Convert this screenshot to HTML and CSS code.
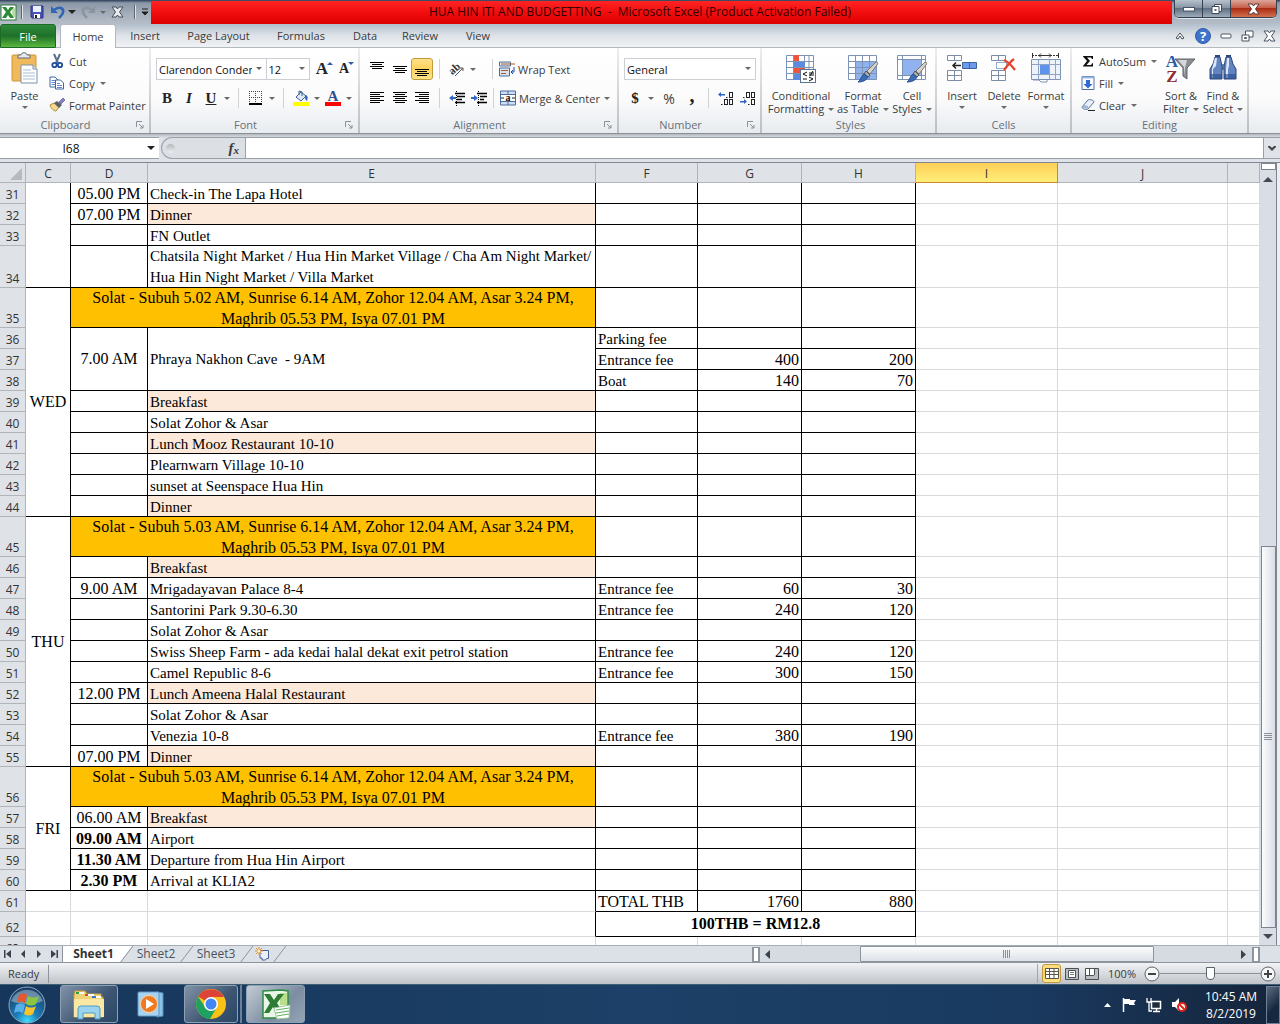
FILE: index.html
```html
<!DOCTYPE html>
<html lang="en">
<head>
<meta charset="utf-8">
<meta name="viewport" content="width=device-width, initial-scale=1">
<title>HUA HIN ITI AND BUDGETTING - Microsoft Excel</title>
<link rel="stylesheet" href="styles.css">
</head>
<body>
<div class="app">
  <header class="titlebar">
    <div class="quick-access">
      <svg class="ico" width="17" height="17" viewBox="0 0 17 17"><rect x="1" y="1" width="15" height="15" fill="#fff" stroke="#2c7a36"/><rect x="12" y="4" width="3" height="9" fill="#b9dcae"/><path d="M2 3h4l2 3 2-3h4L10 8l4 6h-4l-2-3-2 3H2l4-6z" fill="#2e8b35"/></svg>
      <span class="qa-sep"></span>
      <button class="qa" aria-label="Save"><svg width="14" height="14" viewBox="0 0 14 14"><path d="M1 1h12v12H2L1 12z" fill="#4a52b8" stroke="#2c3385"/><rect x="3" y="1" width="8" height="6" fill="#e8f1fb"/><rect x="4" y="9" width="6" height="4" fill="#fff"/><rect x="5" y="10" width="2" height="3" fill="#222"/></svg></button>
      <button class="qa" aria-label="Undo"><svg width="14" height="14" viewBox="0 0 14 14"><path d="M3 5c5-4 10-2 9 2 0 2-2 4-4 6" fill="none" stroke="#2f66b5" stroke-width="2.600"/><path d="M0 1v7h7z" fill="#2f66b5"/></svg></button>
      <span class="arrow dark"></span>
      <button class="qa redo" aria-label="Redo"><svg width="14" height="14" viewBox="0 0 14 14"><path d="M11 5C6 1 1 3 2 7c0 2 2 4 4 6" fill="none" stroke="#8a94a1" stroke-width="2.600"/><path d="M14 1v7H7z" fill="#8a94a1"/></svg></button>
      <span class="arrow"></span>
      <button class="qa wide" aria-label="Close file"><svg width="13" height="12" viewBox="0 0 13 12"><path d="M1 1h4l1.500 2L8 1h4L8.500 6l3.500 5H8L6.500 9 5 11H1l3.500-5z" fill="#e8ebee" stroke="#454e58"/></svg></button>
      <span class="qa-sep"></span>
      <button class="qa more" aria-label="Customize"><svg width="8" height="8" viewBox="0 0 8 8"><path d="M1 1h6M1 4h6L4 7z" stroke="#222" fill="#222"/></svg></button>
    </div>
    <h1 class="title">HUA HIN ITI AND BUDGETTING&nbsp; -&nbsp; Microsoft Excel (Product Activation Failed)</h1>
    <div class="win-buttons">
      <button class="win" aria-label="Minimize"><svg width="12" height="6" viewBox="0 0 12 6"><rect x=".5" y="1.500" width="11" height="3.500" fill="#fff" stroke="#4a5460"/></svg></button>
      <button class="win" aria-label="Restore"><svg width="12" height="12" viewBox="0 0 12 12"><path d="M3.500 1.500h7v7h-7z" fill="#fff" stroke="#3f4a56"/><path d="M1 3.500h7v7H1z" fill="#fff" stroke="#3f4a56"/><rect x="3.500" y="6" width="2" height="2" fill="#5a6570"/></svg></button>
      <button class="win close" aria-label="Close"><svg width="13" height="12" viewBox="0 0 13 12"><path d="M1 1h4l1.500 2L8 1h4L8.500 6l3.500 5H8L6.500 9 5 11H1l3.500-5z" fill="#fff" stroke="#5b3a38"/></svg></button>
    </div>
  </header>

  <nav class="tabs">
    <button class="tab file">File</button>
    <button class="tab home">Home</button>
    <button class="tab w1">Insert</button>
    <button class="tab w4">Page Layout</button>
    <button class="tab w3">Formulas</button>
    <button class="tab w2">Data</button>
    <button class="tab w1">Review</button>
    <button class="tab w1">View</button>
    <div class="tab-tools">
      <svg width="12" height="10" viewBox="0 0 12 10"><path d="M2 7l4-5 4 5-2 1-2-3-2 3z" fill="#fff" stroke="#444d57"/></svg>
      <svg width="16" height="16" viewBox="0 0 16 16"><circle cx="8" cy="8" r="7.500" fill="#3f74cc" stroke="#2f5aa6"/><text x="8" y="13" text-anchor="middle" class="help-mark">?</text></svg>
      <svg width="12" height="6" viewBox="0 0 12 6"><rect x="1" y="1" width="10" height="4" rx="1" fill="#fff" stroke="#4a5460"/></svg>
      <svg width="13" height="12" viewBox="0 0 13 12"><path d="M4.500 1h7.500v6H4.500z" fill="#fff" stroke="#4a5460"/><path d="M1 5h7v6H1z" fill="#fff" stroke="#4a5460"/><path d="M3.500 7.500h2v1h-2z" fill="none" stroke="#4a5460"/></svg>
      <svg width="13" height="12" viewBox="0 0 13 12"><path d="M1 1h4l1.500 2L8 1h4L8.500 6l3.500 5H8L6.500 9 5 11H1l3.500-5z" fill="#fff" stroke="#4a5460"/></svg>
    </div>
  </nav>

  <section class="ribbon">
    <div class="group g-clipboard">
      <div class="group-body">
        <button class="big paste"><svg width="30" height="32" viewBox="0 0 30 32"><rect x="2" y="3" width="24" height="26" rx="1" fill="#efb95c" stroke="#cf963c"/><path d="M8 6V3h3c0-3 6-3 6 0h3v3z" fill="#e9ecef" stroke="#606a75"/><path d="M11 13h12l4 4v14H11z" fill="#fff" stroke="#7c90ab"/><path d="M23 13v4h4" fill="#dbe5f2" stroke="#7c90ab"/><path d="M13 18h8M13 21h12M13 24h12M13 27h12" stroke="#a9bcd6"/></svg><span>Paste</span><i class="arrow"></i></button>
        <div class="stack">
          <button class="small"><svg width="16" height="16" viewBox="0 0 16 16"><path d="M5 1l4 9M11 1L7 10" stroke="#5b7089" stroke-width="2" fill="none"/><circle cx="5.500" cy="12" r="2.200" fill="none" stroke="#1e4b9c" stroke-width="1.800"/><circle cx="11" cy="12" r="2.200" fill="none" stroke="#1e4b9c" stroke-width="1.800"/></svg>Cut</button>
          <button class="small"><svg width="16" height="16" viewBox="0 0 16 16"><path d="M1 2h5l3 3v7H1z" fill="#fff" stroke="#3c64a8"/><path d="M2.500 5.500h4M2.500 7.500h4M2.500 9.500h4" stroke="#5f88c8"/><path d="M6.500 5h5l3 3v6h-8z" fill="#fff" stroke="#3c64a8"/><path d="M8 8.500h3M8 10.500h5M8 12.500h5" stroke="#5f88c8"/></svg>Copy<i class="arrow"></i></button>
          <button class="small"><svg width="16" height="16" viewBox="0 0 16 16"><path d="M1 8l4-2 5 4-3 4c-2 0-5-2-6-6z" fill="#f2d98c" stroke="#b08a34"/><path d="M5 6l3-2 5 4-3 3z" fill="#595f6b"/><path d="M10 5l4-4 2 2-4 4z" fill="#8c80c8" stroke="#4a4a78" stroke-width=".6"/></svg>Format Painter</button>
        </div>
      </div>
      <div class="group-foot"><span>Clipboard</span><button class="launcher" aria-label="Clipboard options"><svg width="8" height="8" viewBox="0 0 8 8"><path d="M.5 6V.5H6M3 3l4 4M7 4v3H4" fill="none" stroke="#8b9199"/></svg></button></div>
    </div>

    <div class="group g-font">
      <div class="group-body rows">
        <div class="row">
          <label class="combo c-font"><select aria-label="Font"><option>Clarendon Condensed</option></select></label>
          <label class="combo c-size"><select aria-label="Font size"><option>12</option></select></label>
          <button class="tool t24 serif grow" aria-label="Grow font">A<i class="up"></i></button>
          <button class="tool t20 serif shrink" aria-label="Shrink font">A<i class="down"></i></button>
        </div>
        <div class="row">
          <button class="tool t22 serif b">B</button>
          <button class="tool t22 serif i">I</button>
          <button class="tool t22 serif u">U</button>
          <i class="arrow"></i><span class="sep"></span>
          <button class="tool t22" aria-label="Borders"><svg width="14" height="14" viewBox="0 0 14 14"><path d="M.5 0v13M6.500 0v13M12.500 0v13M0 .5h13M0 6.500h13" stroke="#444" stroke-dasharray="1 1"/><path d="M0 13h13" stroke="#000" stroke-width="2"/></svg></button>
          <i class="arrow"></i><span class="sep"></span>
          <button class="tool t22" aria-label="Fill color"><svg width="16" height="16" viewBox="0 0 16 16"><path d="M3 7l5-5 5 4-5 5z" fill="#dfe9f6" stroke="#3b5f96"/><path d="M6 5V1l3 1v4" fill="none" stroke="#3b5f96"/><path d="M12 5c3 0 3 3 2 6-2-1-2-3-2-6z" fill="#2c63b8"/><rect y="12" width="16" height="4" fill="#ff0"/></svg></button>
          <i class="arrow"></i>
          <button class="tool t22 serif" aria-label="Font color"><svg width="16" height="16" viewBox="0 0 16 16"><rect y="12" width="16" height="4" fill="#f00"/><text x="8" y="11" text-anchor="middle" class="font-a">A</text></svg></button>
          <i class="arrow"></i>
        </div>
      </div>
      <div class="group-foot"><span>Font</span><button class="launcher" aria-label="Font options"><svg width="8" height="8" viewBox="0 0 8 8"><path d="M.5 6V.5H6M3 3l4 4M7 4v3H4" fill="none" stroke="#8b9199"/></svg></button></div>
    </div>

    <div class="group g-align">
      <div class="group-body rows">
        <div class="row">
          <button class="tool t23" aria-label="Top align"><svg width="14" height="16" viewBox="0 0 14 16"><path d="M0 1.500h14M2 3.500h10M0 5.500h14M2 7.500h10" stroke="#000"/></svg></button>
          <button class="tool t23" aria-label="Middle align"><svg width="14" height="16" viewBox="0 0 14 16"><path d="M0 5.500h14M2 7.500h10M0 9.500h14M2 11.500h10" stroke="#000"/></svg></button>
          <button class="tool t22 on" aria-label="Bottom align"><svg width="14" height="16" viewBox="0 0 14 16"><path d="M0 8.500h14M2 10.500h10M0 12.500h14M2 14.500h10" stroke="#000"/></svg></button>
          <span class="sep"></span>
          <button class="tool t22" aria-label="Orientation"><svg width="17" height="16" viewBox="0 0 17 16"><text x="1" y="12" transform="rotate(-42 5 10)" class="orient">ab</text><path d="M6 15l8-8M11 7h3v3" fill="none" stroke="#555"/></svg></button>
          <i class="arrow"></i><span class="sep push"></span>
          <button class="small wrap"><svg width="16" height="16" viewBox="0 0 16 16"><path d="M.5 1h11v4H.5z" fill="#e2ebf7" stroke="#4c6d9c"/><path d="M2 3h14" stroke="#b5581c"/><path d="M.5 7h10v8H.5z" fill="#d8e4f4" stroke="#4c6d9c"/><path d="M2 9.500h7M2 12.500h5" stroke="#b5581c"/><path d="M15 6v5h-3M14 9l-2 2 2 2" stroke="#1e4b9c" fill="none"/></svg>Wrap Text</button>
        </div>
        <div class="row">
          <button class="tool t23" aria-label="Align left"><svg width="14" height="14" viewBox="0 0 14 14"><path d="M0 1.500h14M0 3.500h10M0 5.500h14M0 7.500h10M0 9.500h14M0 11.500h10" stroke="#000"/></svg></button>
          <button class="tool t23" aria-label="Center"><svg width="14" height="14" viewBox="0 0 14 14"><path d="M0 1.500h14M2 3.500h10M0 5.500h14M2 7.500h10M0 9.500h14M2 11.500h10" stroke="#000"/></svg></button>
          <button class="tool t22" aria-label="Align right"><svg width="14" height="14" viewBox="0 0 14 14"><path d="M0 1.500h14M4 3.500h10M0 5.500h14M4 7.500h10M0 9.500h14M4 11.500h10" stroke="#000"/></svg></button>
          <span class="sep"></span>
          <button class="tool t22" aria-label="Decrease indent"><svg width="17" height="15" viewBox="0 0 17 15"><path d="M7.500 0v15" stroke="#000" stroke-dasharray="1 1"/><path d="M6 2.500h10M8 5.500h8M8 8.500h5M6 11.500h10" stroke="#000" stroke-width="1.500"/><path d="M0 7l4-3v2h3v2H4v2z" fill="#2f66c5"/></svg></button>
          <button class="tool t22" aria-label="Increase indent"><svg width="17" height="15" viewBox="0 0 17 15"><path d="M7.500 0v15" stroke="#000" stroke-dasharray="1 1"/><path d="M6 2.500h10M9 5.500h7M9 8.500h4M6 11.500h10" stroke="#000" stroke-width="1.500"/><path d="M7 7L3 4v2H0v2h3v2z" fill="#2f66c5"/></svg></button>
          <span class="sep tight"></span>
          <button class="small wrap"><svg width="16" height="16" viewBox="0 0 16 16"><path d="M.5 1h15v14H.5zM.5 4.500h15M.5 11.500h15M8 1v3M8 12v3" fill="#cfdef2" stroke="#4c6d9c"/><rect x="1" y="5" width="14" height="6" fill="#fff"/><path d="M1 8h3M12 8h3" stroke="#222"/><text x="8" y="11" text-anchor="middle" class="tiny-a">a</text></svg>Merge &amp; Center<i class="arrow"></i></button>
        </div>
      </div>
      <div class="group-foot"><span>Alignment</span><button class="launcher" aria-label="Alignment options"><svg width="8" height="8" viewBox="0 0 8 8"><path d="M.5 6V.5H6M3 3l4 4M7 4v3H4" fill="none" stroke="#8b9199"/></svg></button></div>
    </div>

    <div class="group g-number">
      <div class="group-body rows">
        <div class="row"><label class="combo c-num"><select aria-label="Number format"><option>General</option></select></label></div>
        <div class="row">
          <button class="tool t22 sym">$</button><i class="arrow"></i>
          <button class="tool pct">%</button>
          <button class="tool t20 sym comma">,</button>
          <span class="sep"></span>
          <button class="tool t22" aria-label="Increase decimal"><svg width="17" height="15" viewBox="0 0 17 15"><path d="M0 3.500L3 1v2h4v1.500H3V6z" fill="#2f66c5"/><path d="M8 6h1.500v1H8zM3 13h1.500v1H3z" fill="#222"/><g fill="none" stroke="#222"><rect x="11.500" y="1.500" width="3" height="5"/><rect x="6.500" y="8.500" width="3" height="5"/><rect x="11.500" y="8.500" width="3" height="5"/></g></svg></button>
          <button class="tool t22" aria-label="Decrease decimal"><svg width="17" height="15" viewBox="0 0 17 15"><path d="M7 10.500L4 8v2H0v1.500h4V13z" fill="#2f66c5"/><path d="M3 6h1.500v1H3zM8 13h1.500v1H8z" fill="#222"/><g fill="none" stroke="#222"><rect x="6.500" y="1.500" width="3" height="5"/><rect x="11.500" y="1.500" width="3" height="5"/><rect x="11.500" y="8.500" width="3" height="5"/></g></svg></button>
        </div>
      </div>
      <div class="group-foot"><span>Number</span><button class="launcher" aria-label="Number options"><svg width="8" height="8" viewBox="0 0 8 8"><path d="M.5 6V.5H6M3 3l4 4M7 4v3H4" fill="none" stroke="#8b9199"/></svg></button></div>
    </div>

    <div class="group g-styles">
      <div class="group-body">
        <button class="big b-cond"><svg width="32" height="32" viewBox="0 0 32 32"><path d="M1.500 3.500h27v24h-27zM1.500 9.500h27M1.500 15.500h27M1.500 21.500h27M8.500 3.500v24M19.500 3.500v24M24 3.500v24" fill="#fff" stroke="#7d93b5"/><path d="M9 3h5v6H9z" fill="#ee5340"/><path d="M9 10h11v5H9zM9 22h6v6H9z" fill="#5b8be0"/><path d="M9 16h11v5H9z" fill="#ee5340"/><rect x="15.500" y="17.500" width="15" height="13" fill="#fff" stroke="#5d7391"/><path d="M22 20l-4 2 4 2M18 27h4M24 21h5M24 23h5M28 19l-3 5M24 25l4 2-4 2" stroke="#111" fill="none"/></svg><span>Conditional<br>Formatting<i class="arrow"></i></span></button>
        <button class="big b-table"><svg width="32" height="32" viewBox="0 0 32 32"><path d="M1.500 3.500h28v24h-28z" fill="#fff" stroke="#7d93b5"/><path d="M8 9h21v18H8z" fill="#90b3f0"/><path d="M1.500 9.500h28M1.500 15.500h28M1.500 21.500h28M8.500 3.500v24M15.500 3.500v24M22.500 3.500v24" stroke="#7d93b5"/><path d="M29 10c2 0 2 1 1 3l-7 9-3-3z" fill="#d9d2c8" stroke="#777"/><path d="M19 19l4 4-2 2-4-3z" fill="#aaa" stroke="#555"/><path d="M17 22l4 3c-2 4-6 5-10 5 3-2 3-6 6-8z" fill="#3b6cb8" stroke="#28508e"/></svg><span>Format<br>as Table<i class="arrow"></i></span></button>
        <button class="big b-cell"><svg width="32" height="32" viewBox="0 0 32 32"><path d="M1.500 3.500h28v24h-28z" fill="#fff" stroke="#7d93b5"/><path d="M7 8h18v15H7z" fill="#90b3f0"/><path d="M1.500 7.500h28M1.500 23.500h28M6.500 3.500v24M25.500 3.500v24" stroke="#7d93b5"/><path d="M29 10c2 0 2 1 1 3l-7 9-3-3z" fill="#d9d2c8" stroke="#777"/><path d="M19 19l4 4-2 2-4-3z" fill="#aaa" stroke="#555"/><path d="M17 22l4 3c-2 4-6 5-10 5 3-2 3-6 6-8z" fill="#3b6cb8" stroke="#28508e"/></svg><span>Cell<br>Styles<i class="arrow"></i></span></button>
      </div>
      <div class="group-foot"><span>Styles</span></div>
    </div>

    <div class="group g-cells">
      <div class="group-body">
        <button class="big b-42"><svg width="32" height="32" viewBox="0 0 32 32"><path d="M1.500 3.500h14v5h-14zM8.500 3.500v5M1.500 18.500h14v10h-14zM8.500 18.500v10M1.500 23.500h14" fill="#fff" stroke="#7b8da8"/><path d="M16.500 10.500h14v6h-14zM23.500 10.500v6" fill="#6d9bec" stroke="#3f62a0"/><path d="M7 13.500h8M10 10.500l-3 3 3 3" fill="none" stroke="#222" stroke-width="1.500"/></svg><span>Insert</span><i class="arrow"></i></button>
        <button class="big b-42"><svg width="32" height="32" viewBox="0 0 32 32"><path d="M3.500 3.500h14v5h-14zM10.500 3.500v5M3.500 18.500h14v10h-14zM10.500 18.500v10M3.500 23.500h14" fill="#fff" stroke="#7b8da8"/><path d="M8.500 10.500h10v6h-10z" fill="none" stroke="#2f5aa6" stroke-dasharray="1 1"/><path d="M16 8c4 2 8 6 11 10M26 7c-4 3-7 7-10 11" fill="none" stroke="#e8432c" stroke-width="2.200"/></svg><span>Delete</span><i class="arrow"></i></button>
        <button class="big b-42"><svg width="32" height="32" viewBox="0 0 32 32"><path d="M2 3.500h26" stroke="#333" stroke-dasharray="2 1"/><path d="M9 3.500h12M11 1.500l-2 2 2 2M19 1.500l2 2-2 2M2.500 1v5M28.500 1v5" stroke="#333" fill="none"/><path d="M1.500 7.500h29v20h-29z" fill="#eef3fb" stroke="#7d93b5"/><path d="M1.500 12.500h29M1.500 22.500h29M8.500 7.500v20M19.500 7.500v20M25.500 7.500v20" stroke="#8fa3c2"/><path d="M10 13h9v9h-9z" fill="#5f92ea"/><path d="M3 28h6l2 2h6v-2" fill="#fff" stroke="#7d93b5"/></svg><span>Format</span><i class="arrow"></i></button>
      </div>
      <div class="group-foot"><span>Cells</span></div>
    </div>

    <div class="group g-edit">
      <div class="group-body">
        <div class="stack">
          <button class="small"><svg width="14" height="16" viewBox="0 0 14 16"><path d="M2 3h10v3h-1l-1-1.500H6L9 8l-3.500 4H10l1.500-2H12v3.500H2V13l4-5-4-4.500z" fill="#111"/></svg>AutoSum<i class="arrow"></i></button>
          <button class="small"><svg width="14" height="16" viewBox="0 0 14 16"><path d="M1 1.500h12v13H1z" fill="#fff" stroke="#4a6ea8"/><path d="M1 1.500h12v2H1z" fill="#9cb9e4"/><path d="M5 5h4v4h2.500L7 13.500 2.500 9H5z" fill="#2f6bd0"/></svg>Fill<i class="arrow"></i></button>
          <button class="small"><svg width="14" height="16" viewBox="0 0 14 16"><path d="M1 10l6-7c1-1 6 0 6 2l-6 7c-2 1-6 0-6-2z" fill="#e9f0fa" stroke="#56709a"/><path d="M1 10c2 2 4 1 6 2v-3L3 8z" fill="#9db5d8"/><path d="M7 13.500h7" stroke="#222"/></svg>Clear<i class="arrow"></i></button>
        </div>
        <button class="big b-42"><svg width="32" height="32" viewBox="0 0 32 32"><text x="7" y="15" text-anchor="middle" class="sort-a">A</text><text x="7" y="30" text-anchor="middle" class="sort-z">Z</text><path d="M10 7h20l-8 9v11l-4-3v-8z" fill="#8b8f94" stroke="#5e6266"/><path d="M13 8h9l-2 8-1 7v-8z" fill="#d5d7d9"/></svg><span>Sort &amp;<br>Filter<i class="arrow"></i></span></button>
        <button class="big b-42"><svg width="32" height="32" viewBox="0 0 32 32"><path d="M13 12h6v6h-6z" fill="#6f8fc4"/><path d="M8 5h5l2 9v13H3V17l3-5z" fill="#6284c0" stroke="#2c477c"/><path d="M19 5h5l2 7 3 5v10H17V14z" fill="#6284c0" stroke="#2c477c"/><path d="M8 6h2l-1 8-3 3v9H5v-9zM20 6h2v8l-1 3v9h-2v-9z" fill="#dce7f7"/><path d="M3 22h12v5H3zM17 22h12v5H17z" fill="#24478a" opacity=".6"/><path d="M8 4h5M19 4h5" stroke="#2c477c" stroke-width="2"/></svg><span>Find &amp;<br>Select<i class="arrow"></i></span></button>
      </div>
      <div class="group-foot"><span>Editing</span></div>
    </div>
  </section>

  <section class="formula-bar">
    <input class="name-box" aria-label="Name box" value="I68">
    <span class="name-arrow"><i class="arrow dark"></i></span>
    <div class="fx"><i class="knob"></i><button class="fx-btn" aria-label="Insert function"><i>f</i><small>x</small></button></div>
    <input class="formula" aria-label="Formula">
    <button class="expand" aria-label="Expand formula bar"><svg width="8" height="7" viewBox="0 0 8 7"><path d="M0 1h2l2 2 2-2h2v1L4 6 0 2z" fill="#444"/></svg></button>
  </section>

  <main class="sheet">
    <div class="grid-pane">
      <table class="grid">
        <colgroup><col class="k-head"><col class="k-c"><col class="k-d"><col class="k-e"><col class="k-f"><col class="k-g"><col class="k-h"><col class="k-i"><col class="k-j"><col></colgroup>
        <thead><tr><th class="corner"><svg width="12" height="12" viewBox="0 0 12 12"><path d="M12 0v12H0z" fill="#b6babf"/></svg></th><th>C</th><th>D</th><th>E</th><th>F</th><th>G</th><th>H</th><th class="picked">I</th><th>J</th><th></th></tr></thead>
        <tbody>
          <tr class="l"><th>31</th><td class="day" rowspan="4"></td><td class="t">05.00 PM</td><td>Check-in The Lapa Hotel</td><td></td><td></td><td></td><td class="x"></td><td class="x"></td><td class="x"></td></tr>
          <tr class="l"><th>32</th><td class="t">07.00 PM</td><td class="meal">Dinner</td><td></td><td></td><td></td><td class="x"></td><td class="x"></td><td class="x"></td></tr>
          <tr class="l"><th>33</th><td class="t"></td><td>FN Outlet</td><td></td><td></td><td></td><td class="x"></td><td class="x"></td><td class="x"></td></tr>
          <tr class="l tall"><th>34</th><td class="t"></td><td class="mid"><div class="two">Chatsila Night Market / Hua Hin Market Village / Cha Am Night Market/<br>Hua Hin Night Market / Villa Market</div></td><td></td><td></td><td></td><td class="x"></td><td class="x"></td><td class="x"></td></tr>
          <tr class="l band"><th>35</th><td class="day" rowspan="10">WED</td><td class="solat" colspan="2"><div class="two">Solat - Subuh 5.02 AM, Sunrise 6.14 AM, Zohor 12.04 AM, Asar 3.24 PM,<br>Maghrib 05.53 PM, Isya 07.01 PM</div></td><td></td><td></td><td></td><td class="x"></td><td class="x"></td><td class="x"></td></tr>
          <tr class="l"><th>36</th><td class="t mid" rowspan="3">7.00 AM</td><td class="mid" rowspan="3">Phraya Nakhon Cave&nbsp; - 9AM</td><td>Parking fee</td><td></td><td></td><td class="x"></td><td class="x"></td><td class="x"></td></tr>
          <tr class="l"><th>37</th><td>Entrance fee</td><td class="n">400</td><td class="n">200</td><td class="x"></td><td class="x"></td><td class="x"></td></tr>
          <tr class="l"><th>38</th><td>Boat</td><td class="n">140</td><td class="n">70</td><td class="x"></td><td class="x"></td><td class="x"></td></tr>
          <tr class="l"><th>39</th><td class="t"></td><td class="meal">Breakfast</td><td></td><td></td><td></td><td class="x"></td><td class="x"></td><td class="x"></td></tr>
          <tr class="l"><th>40</th><td class="t"></td><td>Solat Zohor &amp; Asar</td><td></td><td></td><td></td><td class="x"></td><td class="x"></td><td class="x"></td></tr>
          <tr class="l"><th>41</th><td class="t"></td><td class="meal">Lunch Mooz Restaurant 10-10</td><td></td><td></td><td></td><td class="x"></td><td class="x"></td><td class="x"></td></tr>
          <tr class="l"><th>42</th><td class="t"></td><td>Plearnwarn Village 10-10</td><td></td><td></td><td></td><td class="x"></td><td class="x"></td><td class="x"></td></tr>
          <tr class="l"><th>43</th><td class="t"></td><td>sunset at Seenspace Hua Hin</td><td></td><td></td><td></td><td class="x"></td><td class="x"></td><td class="x"></td></tr>
          <tr class="l"><th>44</th><td class="t"></td><td class="meal">Dinner</td><td></td><td></td><td></td><td class="x"></td><td class="x"></td><td class="x"></td></tr>
          <tr class="l band"><th>45</th><td class="day" rowspan="11">THU</td><td class="solat" colspan="2"><div class="two">Solat - Subuh 5.03 AM, Sunrise 6.14 AM, Zohor 12.04 AM, Asar 3.24 PM,<br>Maghrib 05.53 PM, Isya 07.01 PM</div></td><td></td><td></td><td></td><td class="x"></td><td class="x"></td><td class="x"></td></tr>
          <tr class="l"><th>46</th><td class="t"></td><td class="meal">Breakfast</td><td></td><td></td><td></td><td class="x"></td><td class="x"></td><td class="x"></td></tr>
          <tr class="l"><th>47</th><td class="t">9.00 AM</td><td>Mrigadayavan Palace 8-4</td><td>Entrance fee</td><td class="n">60</td><td class="n">30</td><td class="x"></td><td class="x"></td><td class="x"></td></tr>
          <tr class="l"><th>48</th><td class="t"></td><td>Santorini Park 9.30-6.30</td><td>Entrance fee</td><td class="n">240</td><td class="n">120</td><td class="x"></td><td class="x"></td><td class="x"></td></tr>
          <tr class="l"><th>49</th><td class="t"></td><td>Solat Zohor &amp; Asar</td><td></td><td></td><td></td><td class="x"></td><td class="x"></td><td class="x"></td></tr>
          <tr class="l"><th>50</th><td class="t"></td><td>Swiss Sheep Farm - ada kedai halal dekat exit petrol station</td><td>Entrance fee</td><td class="n">240</td><td class="n">120</td><td class="x"></td><td class="x"></td><td class="x"></td></tr>
          <tr class="l"><th>51</th><td class="t"></td><td>Camel Republic 8-6</td><td>Entrance fee</td><td class="n">300</td><td class="n">150</td><td class="x"></td><td class="x"></td><td class="x"></td></tr>
          <tr class="l"><th>52</th><td class="t">12.00 PM</td><td class="meal">Lunch Ameena Halal Restaurant</td><td></td><td></td><td></td><td class="x"></td><td class="x"></td><td class="x"></td></tr>
          <tr class="l"><th>53</th><td class="t"></td><td>Solat Zohor &amp; Asar</td><td></td><td></td><td></td><td class="x"></td><td class="x"></td><td class="x"></td></tr>
          <tr class="l"><th>54</th><td class="t"></td><td>Venezia 10-8</td><td>Entrance fee</td><td class="n">380</td><td class="n">190</td><td class="x"></td><td class="x"></td><td class="x"></td></tr>
          <tr class="l"><th>55</th><td class="t">07.00 PM</td><td class="meal">Dinner</td><td></td><td></td><td></td><td class="x"></td><td class="x"></td><td class="x"></td></tr>
          <tr class="l band"><th>56</th><td class="day" rowspan="5">FRI</td><td class="solat" colspan="2"><div class="two">Solat - Subuh 5.03 AM, Sunrise 6.14 AM, Zohor 12.04 AM, Asar 3.24 PM,<br>Maghrib 05.53 PM, Isya 07.01 PM</div></td><td></td><td></td><td></td><td class="x"></td><td class="x"></td><td class="x"></td></tr>
          <tr class="l"><th>57</th><td class="t">06.00 AM</td><td class="meal">Breakfast</td><td></td><td></td><td></td><td class="x"></td><td class="x"></td><td class="x"></td></tr>
          <tr class="l"><th>58</th><td class="t strong">09.00 AM</td><td>Airport</td><td></td><td></td><td></td><td class="x"></td><td class="x"></td><td class="x"></td></tr>
          <tr class="l"><th>59</th><td class="t strong">11.30 AM</td><td>Departure from Hua Hin Airport</td><td></td><td></td><td></td><td class="x"></td><td class="x"></td><td class="x"></td></tr>
          <tr class="l"><th>60</th><td class="t strong">2.30 PM</td><td>Arrival at KLIA2</td><td></td><td></td><td></td><td class="x"></td><td class="x"></td><td class="x"></td></tr>
          <tr><th>61</th><td class="x"></td><td class="x"></td><td class="x edge"></td><td class="k">TOTAL THB</td><td class="k n">1760</td><td class="k n">880</td><td class="x"></td><td class="x"></td><td class="x"></td></tr>
          <tr class="rate"><th>62</th><td class="x"></td><td class="x"></td><td class="x edge"></td><td class="k t mid strong" colspan="3">100THB = RM12.8</td><td class="x"></td><td class="x"></td><td class="x"></td></tr>
          <tr><th>63</th><td class="x"></td><td class="x"></td><td class="x"></td><td class="x"></td><td class="x"></td><td class="x"></td><td class="x"></td><td class="x"></td><td class="x"></td></tr>
        </tbody>
      </table>
    </div>
    <div class="vscroll">
      <i class="vsplit"></i>
      <i class="vbtn"><svg width="10" height="6" viewBox="0 0 10 6"><path d="M5 0l5 5H0z" fill="#444a52"/></svg></i>
      <i class="vspace"></i>
      <i class="vthumb"><svg width="8" height="8" viewBox="0 0 8 8"><path d="M0 .5h8M0 2.500h8M0 4.500h8M0 6.500h8" stroke="#8a9099"/></svg></i>
      <i class="vbtn low"><svg width="10" height="6" viewBox="0 0 10 6"><path d="M5 5l5-5H0z" fill="#444a52"/></svg></i>
    </div>
  </main>

  <section class="sheet-tabs">
    <div class="nav">
      <button aria-label="First sheet"><svg width="8" height="8" viewBox="0 0 8 8"><path d="M0 0h1.500v8H0zM7 0v8L2 4z" fill="#3b424b"/></svg></button>
      <button aria-label="Previous sheet"><svg width="8" height="8" viewBox="0 0 8 8"><path d="M6 0v8L2 4z" fill="#3b424b"/></svg></button>
      <button aria-label="Next sheet"><svg width="8" height="8" viewBox="0 0 8 8"><path d="M2 0v8l4-4z" fill="#3b424b"/></svg></button>
      <button aria-label="Last sheet"><svg width="8" height="8" viewBox="0 0 8 8"><path d="M1 0v8l5-4zM6.500 0H8v8H6.500z" fill="#3b424b"/></svg></button>
    </div>
    <button class="stab active">Sheet1</button>
    <svg width="14" height="17" viewBox="0 0 14 17"><path d="M0 0h13L1 16H0z" fill="#fff"/><path d="M14 0L1 17" stroke="#8d949e"/></svg>
    <button class="stab">Sheet2</button>
    <svg width="14" height="17" viewBox="0 0 14 17"><path d="M14 0L1 17" stroke="#8d949e"/></svg>
    <button class="stab">Sheet3</button>
    <svg width="14" height="17" viewBox="0 0 14 17"><path d="M14 0L1 17" stroke="#8d949e"/></svg>
    <button class="stab new" aria-label="Insert worksheet"><svg width="16" height="14" viewBox="0 0 16 14"><path d="M5 3.500h8.500v8h-2l-1 1.500H7V11H5z" fill="#e8f0fb" stroke="#4a5f96"/><path d="M4 0v8M0 4h8M1 1l6 6M7 1L1 7" stroke="#e8932a"/><circle cx="4" cy="4" r="1.500" fill="#fff3c0"/></svg></button>
    <svg width="14" height="17" viewBox="0 0 14 17"><path d="M14 0L1 17" stroke="#8d949e"/></svg>
    <span class="tab-space"></span>
    <i class="hsplit"></i>
    <div class="hscroll">
      <svg width="6" height="9" viewBox="0 0 6 9"><path d="M5 0v9L0 4.500z" fill="#3b424b"/></svg>
      <i class="hspace"></i>
      <i class="hthumb"><svg width="8" height="8" viewBox="0 0 8 8"><path d="M.5 0v8M2.500 0v8M4.500 0v8M6.500 0v8" stroke="#8a9099"/></svg></i>
      <i class="hspace after"></i>
      <svg width="6" height="9" viewBox="0 0 6 9"><path d="M0 0v9l5-4.500z" fill="#3b424b"/></svg>
    </div>
    <i class="hsplit"></i>
    <i class="hcorner"></i>
  </section>

  <footer class="status">
    <span class="ready">Ready</span>
    <div class="views">
      <button class="view on" aria-label="Normal"><svg width="14" height="11" viewBox="0 0 14 11"><path d="M.5.500h13v10H.5zM.5 3.500h13M.5 6.500h13M4.500.500v10M9 .5v10" fill="#fff" stroke="#5a5648"/></svg></button>
      <button class="view" aria-label="Page layout"><svg width="14" height="12" viewBox="0 0 14 12"><path d="M.5.500h13v11H.5z" fill="#b9bdc2" stroke="#4c5057"/><path d="M3.500 2.500h7v7h-7z" fill="#fff" stroke="#4c5057"/><path d="M5 4.500h4M5 6.500h4" stroke="#777"/></svg></button>
      <button class="view" aria-label="Page break preview"><svg width="14" height="12" viewBox="0 0 14 12"><path d="M.5.500h13v11H.5z" fill="#b9bdc2" stroke="#4c5057"/><path d="M1 1h3v6H1zM5 1h4v6H5z" fill="#fff"/><path d="M4.500 0v7M9.500 0v7M0 7.500h9" stroke="#4c5057"/></svg></button>
    </div>
    <span class="percent">100%</span>
    <button class="zoom-btn" aria-label="Zoom out"><svg width="16" height="16" viewBox="0 0 16 16"><circle cx="8" cy="8" r="7" fill="#f5f6f7" stroke="#5d636b"/><path d="M4 8h8" stroke="#444" stroke-width="2"/></svg></button>
    <input class="zoom" type="range" aria-label="Zoom" min="0" max="100" value="50">
    <button class="zoom-btn" aria-label="Zoom in"><svg width="16" height="16" viewBox="0 0 16 16"><circle cx="8" cy="8" r="7" fill="#f5f6f7" stroke="#5d636b"/><path d="M4 8h8M8 4v8" stroke="#444" stroke-width="2"/></svg></button>
  </footer>

  <section class="taskbar">
    <button class="start" aria-label="Start"><svg width="40" height="40" viewBox="0 0 40 40"><defs><radialGradient id="orb" cx=".5" cy=".95" r=".9"><stop offset="0" stop-color="#3fe0ff"/><stop offset=".35" stop-color="#1d7dba"/><stop offset="1" stop-color="#1a3f66"/></radialGradient></defs><circle cx="20" cy="20" r="18" fill="url(#orb)" stroke="#8fa9c2"/><path d="M4 16a17 17 0 0 1 32 0c-8 4-24 4-32 0z" fill="#fff" opacity=".35"/><path d="M12 10c3-2 5-2 8 0l-2 8c-3-2-5-2-8 0z" fill="#e8562a"/><path d="M21 11c3 2 7 2 11 0l-3 8c-3 2-7 2-10 0z" fill="#8cc63e"/><path d="M9 20c3-2 6-2 9 0l-2 8c-3-2-6-2-9 0z" fill="#5aaeea"/><path d="M19 21c3 2 7 2 10 0l-3 8c-3 2-6 2-9 0z" fill="#f9c32d"/></svg></button>
    <button class="task explorer" aria-label="Windows Explorer"><svg width="34" height="32" viewBox="0 0 34 32"><path d="M2 7l1-4h10l2 3h14v3h2v20H2z" fill="#f0d377" stroke="#c7a143"/><path d="M4 4h8v2H4z" fill="#fff"/><path d="M4 4h3v2H4z" fill="#2aa33a"/><path d="M13 6h9v2h-9z" fill="#fff"/><path d="M13 6h3v2h-3z" fill="#d84a2c"/><path d="M20 8h9v2h-9z" fill="#fff"/><path d="M20 8h4v2h-4z" fill="#3577cc"/><path d="M2 11h30v18H2z" fill="#f9e7a4"/><path d="M6 31V21q0-3 3-3h16q3 0 3 3v10h-5v-6H11v6z" fill="#9ad4ef" stroke="#4f9cc4"/></svg></button>
    <button class="task media" aria-label="Media Player"><svg width="28" height="28" viewBox="0 0 28 28"><path d="M20 2l6 1v23l-6 1z" fill="#8fc3e6" stroke="#4f8fbf"/><rect x="1" y="2" width="21" height="24" rx="1" fill="#a9d2ee" stroke="#5b9bc9"/><circle cx="12" cy="14" r="8.500" fill="#f07a1e" stroke="#fbd3ae"/><path d="M9 9l8 5-8 5z" fill="#fff"/></svg></button>
    <button class="task chrome" aria-label="Chrome"><svg width="32" height="32" viewBox="0 0 32 32"><circle cx="16" cy="16" r="15" fill="#fbc116"/><path d="M16 16L3 8.500A15 15 0 0 1 29 9H16z" fill="#db4437"/><path d="M3 8.500A15 15 0 0 0 15 31l7-12-6-3-6 3z" fill="#1da261"/><circle cx="16" cy="16" r="7" fill="#fff"/><circle cx="16" cy="16" r="5.500" fill="#4285f4"/></svg></button>
    <i class="task-edge"></i>
    <button class="task excel" aria-label="Excel"><svg width="32" height="32" viewBox="0 0 32 32"><path d="M3 3l18-1 7 1v27H3z" fill="#e9f5e6" stroke="#2e8b45" stroke-width="1.500"/><path d="M20 5l7 0v12h-7z" fill="#b8e08a"/><path d="M4 6h6l4 6 4-6h6l-7 9 6 10h-6l-4-6-4 6H4l6-10z" fill="#2c7c36"/><path d="M14 20l16-3-1 13-12 1z" fill="#fff" stroke="#9fc59f"/><path d="M16 22l13-2M16 25l13-2M17 28l12-2" stroke="#5eb35e"/></svg></button>
    <div class="tray">
      <svg width="9" height="6" viewBox="0 0 9 6"><path d="M4.500 1L8 5H1z" fill="#fff"/></svg>
      <svg width="16" height="16" viewBox="0 0 16 16"><path d="M2.500 1v14" stroke="#fff" stroke-width="1.500"/><path d="M3 2h6v1h6l-2 3 1 2H8V7H3z" fill="#fff"/></svg>
      <svg width="16" height="16" viewBox="0 0 16 16"><path d="M5.500 4.500h9v7h-9zM7 14.500h7M10.500 12v2" fill="#1c2b3c" stroke="#fff" stroke-width="1.500"/><path d="M1 1v4h4V1M3 5v9h3" fill="none" stroke="#fff" stroke-width="1.300"/></svg>
      <svg width="16" height="16" viewBox="0 0 16 16"><path d="M1 5h3l4-4v13l-4-4H1z" fill="#fff"/><circle cx="11" cy="10" r="4" fill="#fff" stroke="#e0241b" stroke-width="2"/><path d="M8 7l6 6" stroke="#e0241b" stroke-width="2"/></svg>
      <div class="clock"><span>10:45 AM</span><span>8/2/2019</span></div>
      <button class="show-desktop" aria-label="Show desktop"></button>
    </div>
  </section>
</div>
</body>
</html>
```
FILE: styles.css
```css
* { box-sizing: border-box; }
body { margin: 0; font-family: "Open Sans", "Noto Sans", sans-serif; font-size: 11px; color: #3b3b3b; }
button, input, select { font: inherit; color: inherit; margin: 0; padding: 0; border: 0; background: none; }
button { display: flex; align-items: center; justify-content: center; white-space: nowrap; }
svg { display: block; flex: none; }
.app { display: flex; flex-direction: column; height: 100vh; overflow: hidden; background: #dfe3e9; }

/* window title */
.titlebar { display: flex; height: 24px; flex: none; background: linear-gradient(#2b3f58 0, #8b98a8 3px, #a5afbb 60%, #b5bec8); }
.quick-access { display: flex; align-items: center; width: 151px; flex: none; }
.qa { width: 22px; }
.redo { width: 26px; }
.wide { width: 26px; }
.more { width: 12px; }
.qa-sep { width: 2px; height: 14px; margin: 0 4px; border-left: 1px solid #5d6671; border-right: 1px solid #dfe3e8; }
.title { flex: 1; margin: 1px 2px 0 0; line-height: 22px; background: linear-gradient(#ff2424, #f20d0d 50%, #da0000); color: #300; font-size: 12px; font-weight: 400; text-align: center; white-space: nowrap; padding-right: 43px; overflow: hidden; }
.win-buttons { display: flex; height: 18px; width: 103px; flex: none; margin-right: 3px; border: 1px solid #36424f; border-top: 0; border-radius: 0 0 5px 5px; overflow: hidden; box-shadow: 0 1px 0 #dbe3ec; }
.win { width: 28px; border-right: 1px solid #36424f; background: linear-gradient(#b8c2ce, #8795a5 45%, #5f7083 50%, #9eacbb); }
.win.close { flex: 1; border: 0; background: linear-gradient(#dba79b, #c7604b 45%, #ab2c14 50%, #d4704e); }

/* ribbon tabs */
.tabs { display: flex; height: 24px; flex: none; border-bottom: 1px solid #b4b9bf; background: linear-gradient(#b3bfcc, #dde2e7 50%, #f1f2f4); }
.tab { height: 23px; }
.file { width: 56px; height: 24px; margin-right: 4px; color: #fff; border-radius: 3px 3px 0 0; border: 1px solid #1d6a26; background: linear-gradient(#2e8b3a, #1e7029 50%, #5ab83d); }
.home { width: 56px; height: 24px; background: #fff; border: 1px solid #b4b9bf; border-bottom: 0; border-radius: 3px 3px 0 0; }
.w1 { width: 58px; }
.w2 { width: 52px; }
.w3 { width: 76px; }
.w4 { width: 89px; }
.tab-tools { display: flex; align-items: center; gap: 9px; margin-left: auto; padding-right: 4px; }
.help-mark { font: bold 13px "Open Sans", sans-serif; fill: #fff; }

/* ribbon */
.ribbon { display: flex; height: 86px; flex: none; background: linear-gradient(#fff, #fbfbfc 60%, #e8ebef); border-bottom: 1px solid #8b9097; }
.group { display: flex; flex-direction: column; flex: none; border-right: 2px solid #c9cdd3; border-image: linear-gradient(#eee, #b9bec5) 1; }
.g-clipboard { width: 151px; }
.g-font { width: 209px; }
.g-align { width: 259px; }
.g-number { width: 143px; }
.g-styles { width: 175px; }
.g-cells { width: 135px; }
.g-edit { width: 177px; }
.group-body { display: flex; flex: 1; min-height: 0; }
.group-body.rows { flex-direction: column; gap: 7px; padding: 10px 4px 0 5px; }
.group-foot { display: flex; height: 16px; flex: none; align-items: center; color: #67707b; }
.group-foot span { flex: 1; text-align: center; line-height: 16px; }
.launcher { width: 18px; height: 16px; }
.row { display: flex; align-items: center; height: 22px; }
.arrow { flex: none; width: 0; height: 0; border: 3px solid transparent; border-top-color: #6a6a6a; border-bottom: 0; }
.row > .arrow { margin: 0 2px; }
.arrow.dark { border-top-color: #222; }
.sep { width: 1px; height: 20px; margin: 0 6px; flex: none; background: #cfd3d8; }
.big { flex-direction: column; justify-content: flex-start; padding-top: 4px; line-height: 13px; }
.big svg { margin-bottom: 5px; }
.big .arrow { margin-top: 4px; }
.big span .arrow { display: inline-block; margin: 0 0 2px 4px; }
.paste { width: 49px; }
.stack { display: flex; flex-direction: column; padding-top: 2px; }
.small { height: 22px; justify-content: flex-start; gap: 4px; }
.small .arrow { margin-left: 1px; }
.tool { height: 22px; position: relative; flex: none; }
.t20 { width: 20px; }
.t22 { width: 22px; }
.t23 { width: 23px; }
.t24 { width: 24px; }
.on { border: 1px solid #c29a3c; border-radius: 3px; background: linear-gradient(#ffe08a, #ffd25c 50%, #ffe48a); }
.serif { font-family: "Liberation Serif", serif; font-size: 17px; font-weight: 700; color: #222; }
.shrink { font-size: 14px; }
.up, .down { position: absolute; right: 1px; top: 4px; border: 3px solid transparent; }
.up { border-bottom-color: #2f5aa6; border-top: 0; }
.down { border-top-color: #2f5aa6; border-bottom: 0; right: 0; }
.b { font-size: 15px; }
.i { font-size: 15px; font-style: italic; }
.u { font-size: 15px; text-decoration: underline; }
.font-a { font: bold 15px "Liberation Serif", serif; fill: #2c4f8f; }
.tiny-a { font: bold 10px "Liberation Serif", serif; fill: #111; }
.orient { font: bold 11px "Liberation Serif", serif; fill: #333; }
.sort-a { font: bold 17px "Liberation Serif", serif; fill: #2f5aa6; }
.sort-z { font: bold 17px "Liberation Serif", serif; fill: #8f2f2f; }
.sym { font-family: "Liberation Serif", serif; font-size: 15px; font-weight: 700; color: #222; }
.comma { font-size: 20px; padding-bottom: 6px; }
.pct { width: 26px; font-size: 14px; }
.combo { position: relative; height: 22px; border: 1px solid #ccd0d5; background: #fff; color: #111; }
.combo + .combo { border-left: 0; }
.combo::after { content: ""; position: absolute; right: 4px; top: 8px; border: 3px solid transparent; border-top-color: #666; border-bottom: 0; }
.combo select { appearance: none; width: 100%; height: 20px; padding: 0 14px 0 2px; }
.c-font { width: 112px; }
.c-size { width: 44px; }
.c-num { width: 134px; }
.push { margin-left: 14px; }
.wrap { gap: 3px; }
.tight { margin-left: 3px; }
.g-styles { padding-left: 4px; }
.b-cond { width: 70px; }
.b-table { width: 54px; }
.b-cell { width: 44px; }
.b-42 { width: 42px; }
.g-cells .group-body { padding-left: 4px; }
.g-edit .stack { width: 88px; padding-left: 9px; }

/* formula bar */
.formula-bar { display: flex; height: 29px; flex: none; padding: 3px 0 4px; border-bottom: 1px solid #82878f; background: linear-gradient(#b3b8bf, #dfe3e9 4px); font-size: 12px; }
.formula-bar > * { height: 22px; border-top: 1px solid #9aa0a8; border-bottom: 1px solid #9aa0a8; }
.name-box { width: 142px; background: #fff; text-align: center; color: #111; }
.name-arrow { display: flex; align-items: center; justify-content: center; width: 17px; background: #fff; }
.name-arrow .arrow, .quick-access .arrow.dark { border-width: 4px 4px 0; }
.fx { display: flex; align-items: center; justify-content: space-between; width: 84px; margin-left: 2px; padding: 0 6px 0 4px; border-left: 1px solid #9aa0a8; border-radius: 11px 0 0 11px; background: #dcdfe4; }
.knob { width: 9px; height: 9px; border-radius: 50%; background: linear-gradient(#b4b8bd, #eee); }
.fx-btn { font-family: "Liberation Serif", serif; font-size: 15px; font-weight: 700; }
.fx-btn small { font-size: 11px; font-style: italic; padding-top: 4px; }
.formula { flex: 1; min-width: 0; background: #fff; border-left: 1px solid #9aa0a8; padding: 0 4px; }
.expand { width: 17px; border-left: 1px solid #9aa0a8; }

/* worksheet */
.sheet { display: flex; flex: 1; min-height: 0; background: #fff; }
.grid-pane { flex: 1; min-width: 0; overflow: hidden; }
.grid { width: 100%; table-layout: fixed; border-collapse: separate; border-spacing: 0; font-family: "Liberation Serif", serif; font-size: 15px; line-height: 18px; color: #000; }
.k-head { width: 26px; }
.k-c { width: 45px; }
.k-d { width: 77px; }
.k-e { width: 448px; }
.k-f { width: 102px; }
.k-g { width: 104px; }
.k-h { width: 114px; }
.k-i { width: 142px; }
.k-j { width: 170px; }
.grid th { padding: 0; font: 400 12px/16px "Open Sans", sans-serif; color: #333; background: #dfe3e8; border-right: 1px solid #b1b5ba; border-bottom: 1px solid #b1b5ba; }
.grid thead th { height: 20px; padding-top: 2px; line-height: 17px; }
.grid thead .picked { background: linear-gradient(#ffd058, #ffee78); border-color: #c58a2a; }
.corner svg { margin: 0 0 0 10px; }
.grid tbody th { vertical-align: bottom; }
.grid td { height: 21px; padding: 0 2px; vertical-align: bottom; white-space: nowrap; overflow: hidden; border-right: 1px solid #000; border-bottom: 1px solid #000; }
.grid .tall td { height: 42px; }
.grid .band td { height: 40px; }
.grid .rate td { height: 25px; }
.grid td.day { padding: 0; text-align: center; vertical-align: middle; font-size: 16px; }
.grid td.t { padding: 0; text-align: center; font-size: 16px; }
.grid td.mid { vertical-align: middle; }
.grid td.n { padding-right: 2px; text-align: right; font-size: 16px; }
.grid td.k { font-size: 16px; }
.grid td.x { border-color: #d8dadd; }
.grid td.edge { border-right-color: #000; }
.grid .strong { font-weight: 700; }
.grid .meal { background: #fde9d9; }
.grid .solat { padding: 0; background: #ffc000; text-align: center; font-size: 16px; }
.two { margin: -1px 0 -2px; line-height: 21px; }

/* scroll bars */
.vscroll { display: flex; flex-direction: column; align-items: center; width: 17px; flex: none; margin-right: 3px; background: #d9dde5; border-right: 1px solid #7f858e; box-shadow: 3px 0 0 #eceef1; }
.vsplit { width: 15px; height: 7px; border: 1px solid #7f858e; background: #fff; }
.vbtn { display: flex; align-items: center; justify-content: center; width: 100%; height: 20px; }
.vbtn.low { height: 17px; }
.vspace { flex: 357; }
.vthumb { display: flex; flex: 382; align-items: center; justify-content: center; width: 15px; border: 1px solid #7f858e; background: linear-gradient(90deg, #fbfcfd, #d9dde6); }
.sheet-tabs { display: flex; align-items: center; height: 17px; flex: none; background: #dce1e8; border-top: 1px solid #a7adb6; color: #4b525c; font-size: 12px; }
.nav { display: flex; width: 63px; height: 16px; justify-content: space-around; border-right: 1px solid #8d949e; }
.stab { height: 16px; width: 46px; line-height: 16px; }
.stab.active { width: 56px; padding-left: 5px; font-weight: 700; color: #333; background: #fff; }
.stab.new { width: 19px; }
.tab-space { flex: 470; }
.hsplit { width: 8px; height: 15px; flex: none; border: 2px solid #8d949e; border-width: 1px 2px; background: #fff; }
.hscroll { display: flex; flex: 487; align-items: center; height: 16px; padding: 0 5px; background: #d6dae1; }
.hspace { flex: 88; }
.hspace.after { flex: 86; }
.hthumb { display: flex; flex: 288; height: 16px; align-items: center; justify-content: center; border: 1px solid #8d949e; border-radius: 1px; background: linear-gradient(#fbfcfd, #dde1e8); }
.hcorner { width: 20px; flex: none; }

/* status bar */
.status { display: flex; align-items: center; height: 22px; flex: none; border-top: 1px solid #8d949e; background: linear-gradient(#f1f3f5, #d8dbdf 50%, #bfc3c8); padding-right: 4px; }
.ready { width: 49px; padding-left: 8px; line-height: 18px; border-right: 1px solid #8d949e; }
.views { display: flex; gap: 1px; margin-left: auto; padding-left: 4px; border-left: 1px solid #a0a5ac; }
.view { width: 19px; height: 19px; }
.percent { width: 43px; text-align: right; padding-right: 8px; }
.zoom-btn { width: 16px; }
.zoom { appearance: none; width: 100px; height: 16px; background: linear-gradient(#8b9097, #8b9097) center / 100% 1px no-repeat; }
.zoom::-webkit-slider-thumb { appearance: none; width: 9px; height: 13px; border: 1px solid #5d636b; border-radius: 1px 1px 5px 5px; background: #fff; }

/* taskbar */
.taskbar { display: flex; height: 40px; flex: none; border-top: 1px solid #3d6075; background: linear-gradient(90deg, #17365c, #1c4067 50%, #1a3a60 80%, #15243a); }
.start { width: 54px; }
.task { height: 38px; }
.explorer { width: 58px; margin-left: 6px; }
.media { width: 52px; margin: 0 7px; }
.chrome { width: 54px; }
.excel { width: 59px; margin-left: 4px; }
.explorer, .chrome, .excel { border: 1px solid #8fa0b3; border-radius: 3px; background: linear-gradient(135deg, #8293a8, #3d5572 60%, #2b4867); }
.excel { background: linear-gradient(135deg, #c3ccd5, #7c8da0 60%, #93a5b5); }
.task-edge { width: 4px; height: 38px; border-right: 2px solid #6d8097; }
.tray { display: flex; align-items: center; margin-left: auto; color: #fff; font-size: 12px; }
.tray svg { margin-right: 9px; }
.clock { display: flex; flex-direction: column; width: 70px; line-height: 17px; text-align: center; }
.show-desktop { width: 14px; height: 38px; border: 1px solid #6d8097; background: linear-gradient(135deg, #5b6b7f, #16283f 60%); }
```
